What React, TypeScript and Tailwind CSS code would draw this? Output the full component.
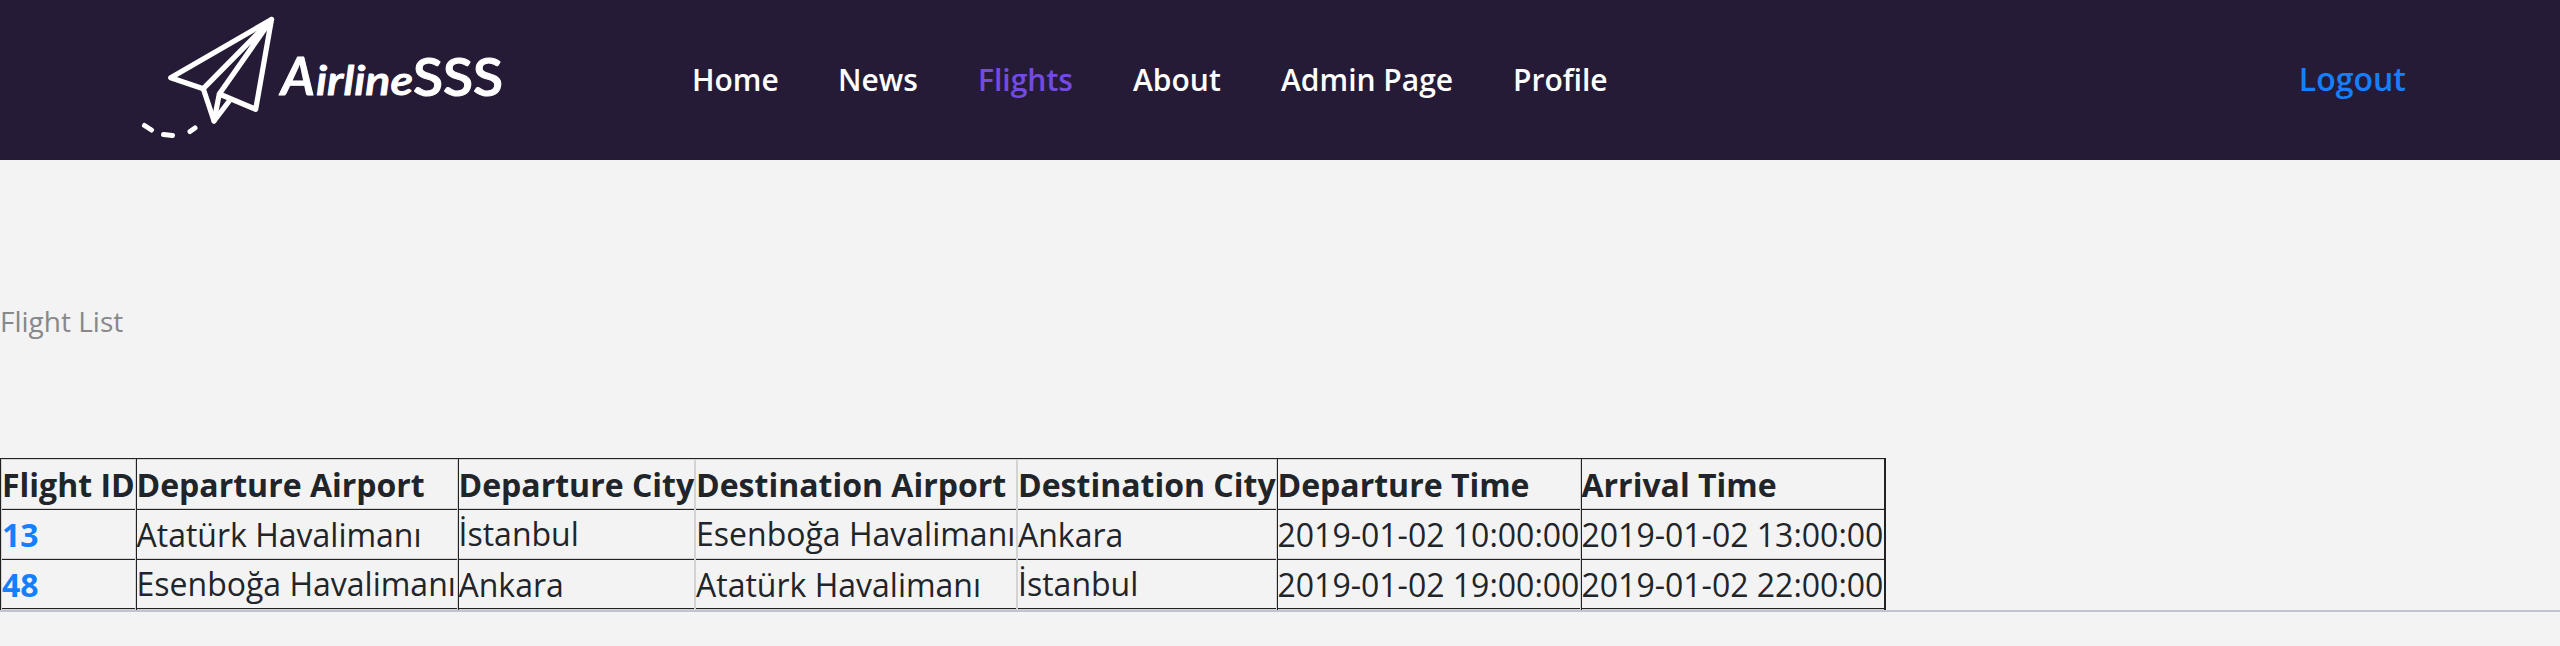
import { Fragment } from "react";

const nav = [
  { label: "Home", cls: "ml-[180px] w-[146px]" },
  { label: "News", cls: "w-[140px]" },
  { label: "Flights", cls: "w-[155px] text-[#734be3]" },
  { label: "About", cls: "w-[148px]" },
  { label: "Admin Page", cls: "w-[232px]" },
  { label: "Profile", cls: "" },
];

const headers = [
  "Flight ID",
  "Departure Airport",
  "Departure City",
  "Destination Airport",
  "Destination City",
  "Departure Time",
  "Arrival Time",
];

const flights = [
  ["13", "Atatürk Havalimanı", "İstanbul", "Esenboğa Havalimanı", "Ankara", "2019-01-02 10:00:00", "2019-01-02 13:00:00"],
  ["48", "Esenboğa Havalimanı", "Ankara", "Atatürk Havalimanı", "İstanbul", "2019-01-02 19:00:00", "2019-01-02 22:00:00"],
];

const dark = "border-r border-[#222222] pr-px shadow-[inset_-1px_0_0_#d3d3d3]";
const light = "border-r-2 border-[#d3d3d3]";
const dividers = [
  "border-r border-[#222222] px-px shadow-[inset_-1px_0_0_#d3d3d3,inset_1px_0_0_#d3d3d3]",
  dark,
  light,
  light,
  dark,
  dark,
  "",
];

const textShift = ["", "-ml-[0.5px]", "-ml-[0.5px]", "", "", "-ml-[0.5px]", "-ml-[0.5px]"];

const rowStyles = [
  "h-[51px] pt-[2px] font-bold shadow-[inset_0_1px_0_#d3d3d3,inset_0_-1px_0_#d3d3d3]",
  "h-[50px] shadow-[inset_0_-1px_0_#d3d3d3]",
  "h-[49px]",
];

function textTop(row: number, cell: string) {
  if (row === 0) return "";
  return /[İğ]/.test(cell) ? "pt-0" : "pt-px";
}

function Logo() {
  return (
    <svg className="ml-[138px] h-[160px] w-[374px] shrink-0 self-start" viewBox="138 0 374 160" fill="none" stroke="#fff" strokeLinecap="round" strokeLinejoin="round">
      <path d="M271.500 19.500 170.700 77.700 203.300 88.700 214 121 230 100" strokeWidth="5.200" />
      <path d="M271.500 19.500 203.300 88.700M271.500 19.500 219.300 94 255.700 109.300ZM219.300 94 214 121" strokeWidth="5.200" />
      <path d="M144.500 125.500 151.500 130M163.500 134.500 172.500 135.500M190 131.500 195 128" strokeWidth="5" />
      <g fill="#fff" strokeWidth="1" className="font-[Lato,sans-serif]">
        <text x="281" y="95" textLength="34" lengthAdjust="spacingAndGlyphs" fontSize="51" fontStyle="italic">A</text>
        <text x="316" y="95" textLength="97" lengthAdjust="spacingAndGlyphs" fontSize="41" fontStyle="italic">irline</text>
        <text x="413" y="95.500" textLength="90" lengthAdjust="spacingAndGlyphs" fontSize="51">SSS</text>
      </g>
    </svg>
  );
}

export default function App() {
  return (
    <div className="h-[646px] w-[2560px] overflow-hidden bg-[#f3f3f3] font-['Open_Sans',sans-serif] text-[#212529]">
      <header className="flex h-[160px] items-center bg-[#261b37] pb-[2px] text-[30px] font-semibold text-white">
        <Logo />
        <nav className="flex">
          {nav.map((n) => (
            <a key={n.label} className={`whitespace-nowrap ${n.cls}`}>{n.label}</a>
          ))}
        </nav>
        <a className="mr-[154px] ml-auto text-[32px] text-[#1480ff]">Logout</a>
      </header>
      <p className="pt-[137px] text-[28px] leading-[48px] text-[#888888]">Flight List</p>
      <main className="mt-[113px] border-b-2 border-[#c0c3d0]">
        <div className="grid w-[1886px] grid-cols-[136px_322px_237px_322px_260px_304px_302px] grid-rows-[51px_50px_50px] border-t border-r-2 border-l border-[#222222] text-[32px] leading-[48px] whitespace-nowrap shadow-[inset_0_-1px_0_#d3d3d3]">
          {[headers, ...flights].map((row, r) => (
            <Fragment key={r}>
              {row.map((cell, c) => (
                <div key={c} className={dividers[c]}>
                  <div className={`border-b border-[#222222] ${rowStyles[r]} ${textTop(r, cell)} ${r > 0 && c === 0 ? "font-bold text-[#1480ff]" : ""}`}>
                    <span className={`block ${textShift[c]}`}>{cell}</span>
                  </div>
                </div>
              ))}
            </Fragment>
          ))}
        </div>
      </main>
    </div>
  );
}
